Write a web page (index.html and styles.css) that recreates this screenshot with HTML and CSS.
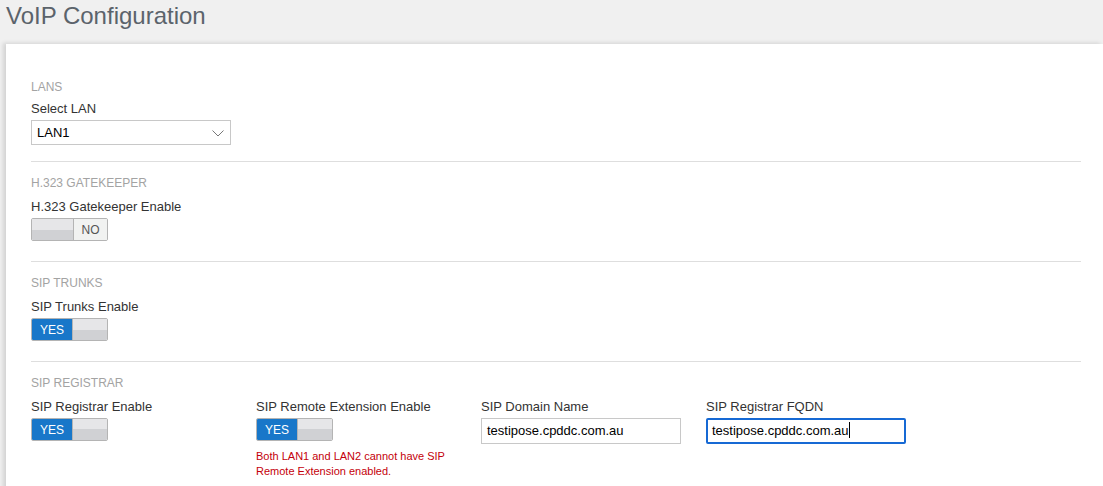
FILE: index.html
```html
<!DOCTYPE html>
<html lang="en">
<head>
    <meta charset="UTF-8">
    <meta name="viewport" content="width=device-width, initial-scale=1.0">
    <title>VoIP Configuration</title>
    <link rel="stylesheet" href="styles.css">
</head>
<body>
    <h1 class="page-title">VoIP Configuration</h1>

    <div class="card">
        <!-- LANS -->
        <div class="section first">
            <div class="section-title">LANS</div>
            <label class="field-label">Select LAN</label>
            <div class="select">
                <span>LAN1</span>
                <svg class="chevron" width="12" height="7" viewBox="0 0 12 7">
                    <polyline points="0.5,0.5 6,6 11.5,0.5" fill="none" stroke="#777" stroke-width="1"/>
                </svg>
            </div>
        </div>

        <!-- H.323 -->
        <div class="section">
            <div class="section-title">H.323 Gatekeeper</div>
            <label class="field-label">H.323 Gatekeeper Enable</label>
            <div class="toggle off">
                <span class="handle"></span>
                <span class="state">NO</span>
            </div>
        </div>

        <!-- SIP trunks -->
        <div class="section">
            <div class="section-title">SIP Trunks</div>
            <label class="field-label">SIP Trunks Enable</label>
            <div class="toggle on">
                <span class="state">YES</span>
                <span class="handle"></span>
            </div>
        </div>

        <!-- SIP registrar -->
        <div class="section last">
            <div class="section-title">SIP Registrar</div>
            <div class="columns">
                <div class="col">
                    <label class="field-label">SIP Registrar Enable</label>
                    <div class="toggle on">
                        <span class="state">YES</span>
                        <span class="handle"></span>
                    </div>
                </div>
                <div class="col">
                    <label class="field-label">SIP Remote Extension Enable</label>
                    <div class="toggle on">
                        <span class="state">YES</span>
                        <span class="handle"></span>
                    </div>
                    <div class="error">Both LAN1 and LAN2 cannot have SIP Remote Extension enabled.</div>
                </div>
                <div class="col">
                    <label class="field-label">SIP Domain Name</label>
                    <div class="text-input">testipose.cpddc.com.au</div>
                </div>
                <div class="col">
                    <label class="field-label">SIP Registrar FQDN</label>
                    <div class="text-input focused">testipose.cpddc.com.au<span class="caret"></span></div>
                </div>
            </div>
        </div>
    </div>
</body>
</html>
```

FILE: styles.css
```css
body {
    margin: 0;
    padding: 0;
    background-color: #f0f0f0;
    font-family: "Liberation Sans", Arial, sans-serif;
    color: #333;
    overflow: hidden;
}
.page-title {
    margin: 0;
    padding: 2px 0 0 6px;
    height: 42px;
    font-size: 24px;
    font-weight: normal;
    line-height: 28px;
    color: #5b636b;
}
.card {
    margin-left: 6px;
    background-color: #fff;
    padding: 22px 22px 0 25px;
    min-height: 500px;
    box-shadow: -3px -1px 4px rgba(0, 0, 0, 0.12);
}
.section {
    padding: 14px 0 20px;
    border-bottom: 1px solid #dedede;
}
.section.first {
    padding-bottom: 16px;
}
.section.last {
    border-bottom: none;
}
.section-title {
    font-size: 12px;
    line-height: 14px;
    text-transform: uppercase;
    color: #a3a3a3;
    margin-bottom: 9px;
}
.first .section-title {
    margin-bottom: 7px;
}
.field-label {
    display: block;
    font-size: 13px;
    line-height: 16px;
    color: #333;
    margin-bottom: 3px;
}
.select {
    width: 200px;
    height: 25px;
    box-sizing: border-box;
    border: 1px solid #c8c8c8;
    display: flex;
    align-items: center;
    justify-content: space-between;
    padding: 0 6px 0 5px;
    font-size: 13px;
    color: #000;
}
.chevron {
    margin-top: 1px;
}
.toggle {
    display: flex;
    width: 77px;
    height: 23px;
    box-sizing: border-box;
    border: 1px solid #b4b4b4;
    border-radius: 2px;
    overflow: hidden;
    font-size: 12px;
}
.toggle .state {
    display: flex;
    align-items: center;
    justify-content: center;
}
.toggle .handle {
    background: linear-gradient(#e6e6e8 0%, #e6e6e8 50%, #d0d1d4 50%, #d0d1d4 100%);
}
.toggle.off .handle {
    width: 41px;
    border-right: 1px solid #b4b4b4;
}
.toggle.off .state {
    flex: 1;
    background-color: #f1f2f1;
    color: #555;
}
.toggle.on .state {
    width: 40px;
    background-color: #1877c9;
    color: #fff;
}
.toggle.on .handle {
    flex: 1;
    border-left: 1px solid #b4b4b4;
}
.columns {
    display: grid;
    grid-template-columns: repeat(4, 225px);
}
.error {
    margin-top: 8px;
    width: 200px;
    font-size: 11px;
    line-height: 15px;
    color: #c4000a;
}
.text-input {
    width: 200px;
    height: 26px;
    box-sizing: border-box;
    border: 1px solid #c8c8c8;
    padding: 0 5px;
    font-size: 13px;
    line-height: 24px;
    color: #000;
}
.text-input.focused {
    border: 2px solid #1669d4;
    border-radius: 2px;
    padding: 0 4px;
    line-height: 22px;
}
.caret {
    display: inline-block;
    width: 1px;
    height: 16px;
    background-color: #000;
    vertical-align: -3px;
}
```
